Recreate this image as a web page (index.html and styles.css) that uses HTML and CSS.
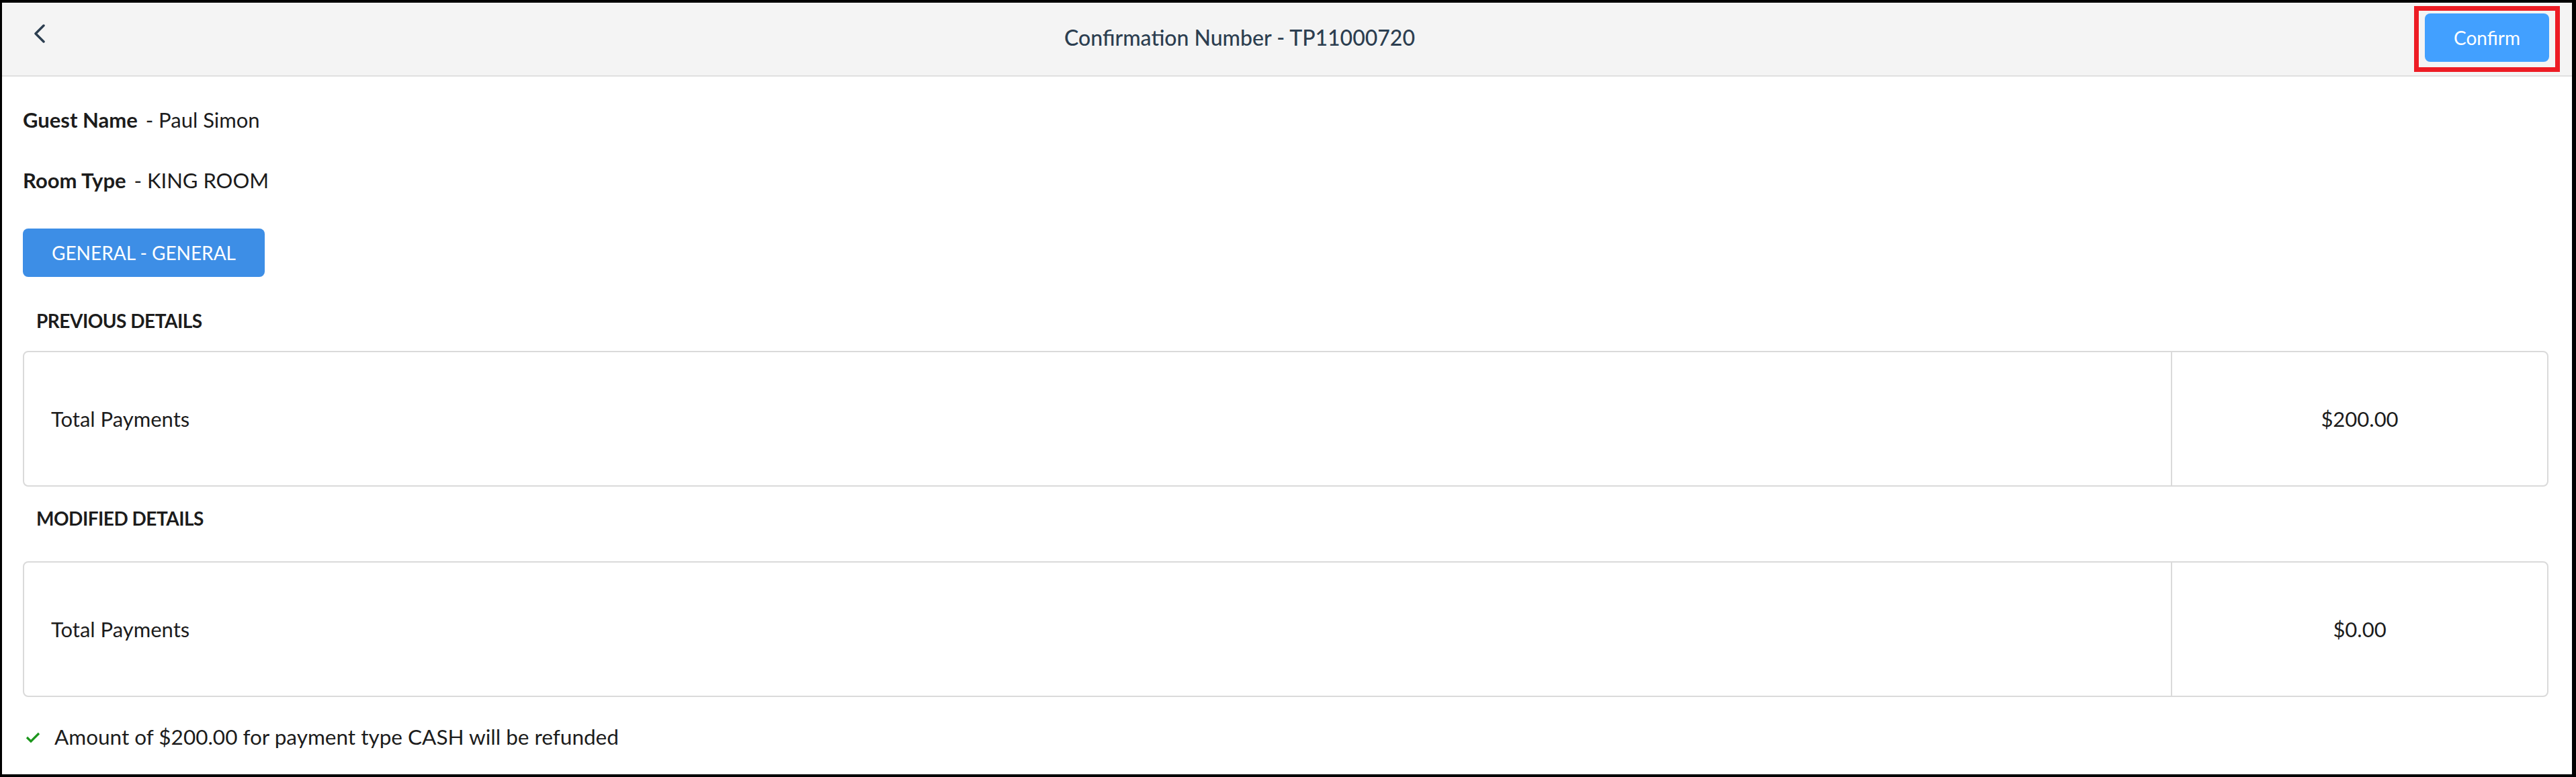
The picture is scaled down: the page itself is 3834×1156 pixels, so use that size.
FILE: index.html
```html
<!DOCTYPE html>
<html lang="en">
<head>
    <meta charset="UTF-8">
    <meta name="viewport" content="width=device-width, initial-scale=1.0">
    <title>Confirmation Number - TP11000720</title>
    <link rel="stylesheet" href="styles.css">
</head>
<body>
    <header class="top-bar">
        <a href="#" class="btn-back" aria-label="Back">
            <svg width="16" height="28" viewBox="0 0 16 28">
                <polyline points="14,2 2,14 14,26" fill="none" stroke="#2c3e50" stroke-width="3.5" stroke-linecap="round" stroke-linejoin="round"/>
            </svg>
        </a>
        <h1 class="page-title">Confirmation Number - TP11000720</h1>
        <span class="highlight">
            <button class="btn-confirm">Confirm</button>
        </span>
    </header>

    <main class="content">
        <p class="info-line"><strong>Guest Name</strong> - Paul Simon</p>
        <p class="info-line room"><strong>Room Type</strong> - KING ROOM</p>

        <button class="btn-tab">GENERAL - GENERAL</button>

        <h2 class="section-title first">PREVIOUS DETAILS</h2>
        <div class="detail-card">
            <div class="cell-label">Total Payments</div>
            <div class="cell-value">$200.00</div>
        </div>

        <h2 class="section-title">MODIFIED DETAILS</h2>
        <div class="detail-card second">
            <div class="cell-label">Total Payments</div>
            <div class="cell-value">$0.00</div>
        </div>

        <p class="refund-note">
            <svg width="22" height="16" viewBox="0 0 22 16">
                <polyline points="2,8 8,14 20,2" fill="none" stroke="#1c961c" stroke-width="3.2"/>
            </svg>
            <span>Amount of $200.00 for payment type CASH will be refunded</span>
        </p>
    </main>
</body>
</html>
```

FILE: styles.css
```css
* {
    box-sizing: border-box;
}

html, body {
    height: 100%;
}

body {
    margin: 0;
    font-family: 'Lato', 'Liberation Sans', sans-serif;
    font-size: 31px;
    color: #1c1c1c;
    background: #fff;
    border-style: solid;
    border-color: #000;
    border-width: 4px 6px 4px 3px;
    overflow: hidden;
}

/* header */
.top-bar {
    display: flex;
    align-items: center;
    height: 110px;
    padding: 0 18px 0 40px;
    background-color: #f4f4f4;
    border-bottom: 2px solid #e0e0e0;
}

.btn-back {
    display: flex;
    width: 54px;
    padding-left: 8px;
    margin-bottom: 17px;
}

.page-title {
    flex: 1;
    margin: 0 0 5px 0;
    text-align: center;
    font-size: 32px;
    font-weight: 500;
    color: #2c3e50;
}

.highlight {
    display: block;
    border: 7px solid #ed1c24;
    padding: 4px 9px 8px 9px;
}

.btn-confirm {
    display: block;
    width: 185px;
    height: 72px;
    border: none;
    border-radius: 8px;
    background-color: #42a0ff;
    color: #fff;
    font-family: inherit;
    font-size: 28px;
}

/* body */
.content {
    padding: 45px 35px 0 31px;
}

.info-line {
    margin: 0;
    line-height: 38px;
}

.info-line strong {
    font-weight: 700;
    margin-right: 4px;
}

.info-line.room {
    margin-top: 52px;
}

.btn-tab {
    display: block;
    margin-top: 53px;
    height: 72px;
    padding: 0 43px;
    border: none;
    border-radius: 8px;
    background-color: #3d8ee6;
    color: #fff;
    font-family: inherit;
    font-size: 28px;
}

.section-title {
    margin: 31px 0 0 0;
    padding-left: 20px;
    font-size: 28px;
    font-weight: 700;
    line-height: 1.2;
    letter-spacing: -0.5px;
}

.section-title.first {
    margin-top: 49px;
}

.detail-card {
    display: grid;
    grid-template-columns: 1fr 560px;
    height: 202px;
    margin-top: 27px;
    border: 2px solid #dadada;
    border-radius: 8px;
}

.detail-card.second {
    margin-top: 47px;
}

.cell-label {
    display: flex;
    align-items: center;
    padding-left: 40px;
}

.cell-value {
    display: flex;
    align-items: center;
    justify-content: center;
    border-left: 2px solid #dadada;
}

.refund-note {
    display: flex;
    align-items: center;
    margin: 41px 0 0 4px;
    font-size: 31.5px;
    line-height: 1.2;
}

.refund-note svg {
    margin-right: 21px;
}
```
